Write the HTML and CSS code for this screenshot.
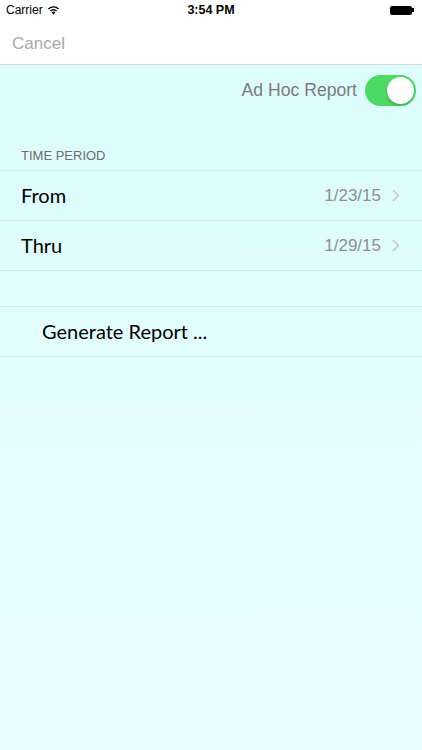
FILE: index.html
```html
<!DOCTYPE html>
<html lang="en">
<head>
    <meta charset="UTF-8">
    <meta name="viewport" content="width=device-width, initial-scale=1.0">
    <title>Ad Hoc Report</title>
    <link rel="stylesheet" href="styles.css">
</head>
<body>

<div class="status-bar">
    <div class="carrier">
        Carrier
        <svg class="wifi" width="13" height="10" viewBox="0 0 13 10">
            <path d="M6.5 9.5 L4.6 7.4 A2.8 2.8 0 0 1 8.4 7.4 Z" fill="#000"/>
            <path d="M3.4 6.1 A4.6 4.6 0 0 1 9.6 6.1" stroke="#000" stroke-width="1.4" fill="none"/>
            <path d="M1.4 3.9 A7.4 7.4 0 0 1 11.6 3.9" stroke="#000" stroke-width="1.4" fill="none"/>
        </svg>
    </div>
    <div class="time">3:54 PM</div>
    <div class="battery">
        <span class="battery-body"></span><span class="battery-tip"></span>
    </div>
</div>

<div class="nav-bar">
    <span class="cancel">Cancel</span>
</div>

<div class="content">
    <div class="toggle-row">
        <span class="toggle-label">Ad Hoc Report</span>
        <span class="switch"><span class="knob"></span></span>
    </div>

    <div class="section-header">TIME PERIOD</div>
    <div class="group">
        <div class="cell">
            <span class="cell-title">From</span>
            <span class="cell-value">1/23/15</span>
            <svg class="chevron" width="8" height="13" viewBox="0 0 8 13">
                <path d="M1 1 L6.5 6.5 L1 12" stroke="#c7c7cc" stroke-width="1.6" fill="none"/>
            </svg>
        </div>
        <div class="cell">
            <span class="cell-title">Thru</span>
            <span class="cell-value">1/29/15</span>
            <svg class="chevron" width="8" height="13" viewBox="0 0 8 13">
                <path d="M1 1 L6.5 6.5 L1 12" stroke="#c7c7cc" stroke-width="1.6" fill="none"/>
            </svg>
        </div>
    </div>

    <div class="group gap">
        <div class="cell action">
            <span class="cell-title">Generate Report ...</span>
        </div>
    </div>
</div>

</body>
</html>
```

FILE: styles.css
```css
body {
    margin: 0;
    font-family: 'Liberation Sans', Arial, sans-serif;
    width: 422px;
    height: 750px;
    overflow: hidden;
    background-color: #fff;
}

/* Status bar */
.status-bar {
    height: 20px;
    display: flex;
    align-items: center;
    justify-content: space-between;
    padding: 0 8px 0 6px;
    font-size: 12px;
    color: #000;
    position: relative;
}

.carrier {
    display: flex;
    align-items: center;
    gap: 4px;
}

.time {
    position: absolute;
    left: 0;
    right: 0;
    text-align: center;
    font-weight: bold;
    font-size: 12.5px;
}

.battery {
    display: flex;
    align-items: center;
}

.battery-body {
    width: 22px;
    height: 9px;
    background-color: #000;
    border-radius: 2px;
}

.battery-tip {
    width: 2px;
    height: 4px;
    background-color: #000;
}

/* Navigation bar */
.nav-bar {
    height: 45px;
    display: flex;
    align-items: center;
    padding: 4px 0 0 12px;
    border-bottom: 1px solid #d6d6d6;
    box-sizing: border-box;
}

.cancel {
    font-size: 17px;
    color: #a8a8a8;
}

/* Content */
.content {
    height: 685px;
    background: linear-gradient(to bottom, #dcfcfd, #eafefe);
}

.toggle-row {
    height: 50px;
    display: flex;
    align-items: center;
    justify-content: flex-end;
    padding-right: 6px;
    gap: 8px;
}

.toggle-label {
    font-size: 17.6px;
    color: #7b7b7b;
}

.switch {
    width: 51px;
    height: 31px;
    border-radius: 16px;
    background-color: #4cd964;
    display: flex;
    align-items: center;
    justify-content: flex-end;
    padding: 2px;
    box-sizing: border-box;
}

.knob {
    width: 27px;
    height: 27px;
    border-radius: 50%;
    background-color: #fff;
    box-shadow: 0 2px 3px rgba(0, 0, 0, 0.2);
}

.section-header {
    height: 55px;
    box-sizing: border-box;
    padding: 33px 0 0 21px;
    font-size: 13px;
    color: #6d6d72;
}

.group {
    border-top: 1px solid #cdeef0;
    border-bottom: 1px solid #cdeef0;
}

.group.gap {
    margin-top: 35px;
}

.cell {
    height: 49px;
    display: flex;
    align-items: center;
    padding: 0 22px 0 21px;
}

.cell + .cell {
    border-top: 1px solid #cdeef0;
}

.cell-title {
    flex: 1;
    font-family: Lato, 'Open Sans', sans-serif;
    font-size: 20px;
    color: #000;
    padding-bottom: 2px;
}

.cell-value {
    font-size: 17px;
    color: #8e8e93;
    margin-right: 11px;
}

.cell.action {
    padding-left: 42px;
}
```
